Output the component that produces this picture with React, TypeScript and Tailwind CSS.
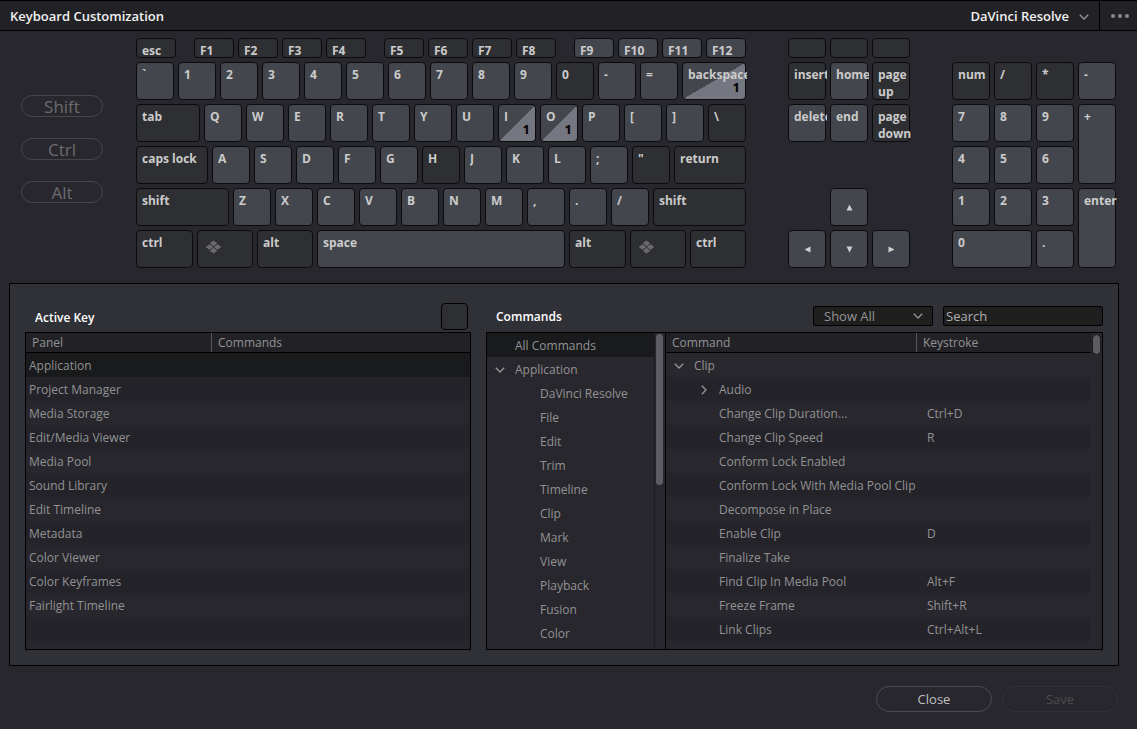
import type { ReactNode } from "react";

type KeyProps = {
  label?: string;
  size?: string;
  lit?: boolean;
  count?: number;
  short?: boolean;
  children?: ReactNode;
};

function Key({ label = "", size = "w-[38px]", lit = false, count, short = false, children }: KeyProps) {
  const fill = count
    ? "bg-[linear-gradient(to_bottom_right,#43464c_50%,#747680_50%)]"
    : lit
      ? "bg-[#43464c]"
      : "bg-[#2e2f32]";
  return (
    <button
      type="button"
      aria-label={label || "Unassigned key"}
      className={`relative flex min-w-0 items-start rounded border border-[#0b0b0d] pt-[3px] pl-[5px] text-left text-[12px] leading-[17px] font-bold text-[#cbcbcb] ${short ? "h-5" : "h-full"} ${size} ${fill}`}
    >
      {children ?? (
        <span className={`-mr-0.5 min-w-0 flex-1 overflow-x-clip ${label.startsWith("page") ? "" : "whitespace-nowrap"}`}>
          {label}
        </span>
      )}
      {count ? <span className="absolute right-[5px] bottom-[3px] text-[13px] text-black">{count}</span> : null}
    </button>
  );
}

function Keys({ labels, dim = [] }: { labels: string[]; dim?: string[] }) {
  return (
    <>
      {labels.map((l) => (
        <Key key={l} label={l} lit={!dim.includes(l)} count={l === "I" || l === "O" ? 1 : undefined} />
      ))}
    </>
  );
}

function MetaKey() {
  return (
    <Key label="meta" size="w-14">
      <svg className="mt-[6px] ml-[3px]" width="15" height="14" viewBox="0 0 16 14" fill="#6b6b6d" aria-hidden="true">
        <path d="M8 0 L11.4 2.4 Q11.8 3 11.4 3.6 L8 6.2 L4.6 3.6 Q4.2 3 4.6 2.4Z" />
        <path d="M8 7.8 L11.4 10.4 Q11.8 11 11.4 11.6 L8 14 L4.6 11.6 Q4.2 11 4.6 10.4Z" />
        <path d="M3.7 4 L7.1 6.4 Q7.5 7 7.1 7.6 L3.7 10 L0.3 7.6 Q-.1 7 .3 6.4Z" />
        <path d="M12.3 4 L15.7 6.4 Q16.1 7 15.7 7.6 L12.3 10 L8.9 7.6 Q8.5 7 8.9 6.4Z" />
      </svg>
    </Key>
  );
}

function ArrowKey({ name, d }: { name: string; d: string }) {
  return (
    <Key label={name} lit>
      <svg className="mt-3 ml-[10px]" width="7" height="7" viewBox="0 0 7 7" fill="#d0d0d0" aria-hidden="true">
        <path d={d} />
      </svg>
    </Key>
  );
}

function Chevron({ right = false, className = "" }: { right?: boolean; className?: string }) {
  return (
    <svg
      className={className}
      width="10"
      height="10"
      viewBox="0 0 10 10"
      fill="none"
      stroke="#97979a"
      strokeWidth="1.3"
      aria-hidden="true"
    >
      <path d={right ? "M2.8 0.8 L7 5 L2.8 9.2" : "M0.8 2.8 L5 7 L9.2 2.8"} />
    </svg>
  );
}

const row = "flex h-[38px] gap-1";
const functionGroups = [
  { names: ["F1", "F2", "F3", "F4"], lit: false },
  { names: ["F5", "F6", "F7", "F8"], lit: false },
  { names: ["F9", "F10", "F11", "F12"], lit: true },
];

function MainKeys() {
  return (
    <div className="flex min-w-[610px] flex-1 flex-col gap-1">
      <div className="flex h-5 justify-between">
        <Key label="esc" size="w-10" short />
        {functionGroups.map((g) => (
          <div key={g.names[0]} className="flex gap-1">
            {g.names.map((n) => (
              <Key key={n} label={n} size="w-10" lit={g.lit} short />
            ))}
          </div>
        ))}
      </div>
      <div className={row}>
        <Keys labels={["`", "1", "2", "3", "4", "5", "6", "7", "8", "9", "0", "-", "="]} dim={["0"]} />
        <Key label="backspace" size="flex-1" count={1} />
      </div>
      <div className={row}>
        <Key label="tab" size="flex-1" />
        <Keys labels={["Q", "W", "E", "R", "T", "Y", "U", "I", "O", "P", "[", "]", "\\"]} dim={["\\"]} />
      </div>
      <div className={row}>
        <Key label="caps lock" size="flex-1" />
        <Keys labels={["A", "S", "D", "F", "G", "H", "J", "K", "L", ";", '"']} dim={["H", '"']} />
        <Key label="return" size="flex-1" />
      </div>
      <div className={row}>
        <Key label="shift" size="flex-1" />
        <Keys labels={["Z", "X", "C", "V", "B", "N", "M", ",", ".", "/"]} />
        <Key label="shift" size="flex-1" />
      </div>
      <div className={row}>
        <Key label="ctrl" size="w-[57px]" />
        <MetaKey />
        <Key label="alt" size="w-14" />
        <Key label="space" size="flex-1" lit />
        <Key label="alt" size="w-[57px]" />
        <MetaKey />
        <Key label="ctrl" size="w-14" />
      </div>
    </div>
  );
}

function NavKeys() {
  return (
    <div className="grid grid-cols-[repeat(3,38px)] grid-rows-[20px_repeat(5,38px)] gap-1">
      <Key short />
      <Key short />
      <Key short />
      <Key label="insert" />
      <Key label="home" lit />
      <Key label="page up" />
      <Key label="delete" lit />
      <Key label="end" lit />
      <Key label="page down" />
      <div className="col-start-2 row-start-5">
        <ArrowKey name="up" d="M3.5 0.5 L6.5 6.5 H0.5Z" />
      </div>
      <div className="col-start-1 row-start-6">
        <ArrowKey name="left" d="M0.5 3.5 L6.5 0.5 V6.5Z" />
      </div>
      <div className="col-start-2 row-start-6">
        <ArrowKey name="down" d="M3.5 6.5 L0.5 0.5 H6.5Z" />
      </div>
      <div className="col-start-3 row-start-6">
        <ArrowKey name="right" d="M6.5 3.5 L0.5 0.5 V6.5Z" />
      </div>
    </div>
  );
}

function NumPad() {
  return (
    <div className="grid grid-cols-[repeat(4,38px)] grid-rows-[repeat(5,38px)] gap-1 pt-6">
      <Keys labels={["num", "/", "*", "-"]} dim={["num", "/", "*"]} />
      <Keys labels={["7", "8", "9"]} />
      <Key label="+" lit size="row-span-2" />
      <Keys labels={["4", "5", "6"]} />
      <Keys labels={["1", "2", "3"]} />
      <Key label="enter" lit size="row-span-2" />
      <Key label="0" lit size="col-span-2" />
      <Key label="." lit />
    </div>
  );
}

const panels = [
  "Application",
  "Project Manager",
  "Media Storage",
  "Edit/Media Viewer",
  "Media Pool",
  "Sound Library",
  "Edit Timeline",
  "Metadata",
  "Color Viewer",
  "Color Keyframes",
  "Fairlight Timeline",
  "",
];

const groups = [
  "DaVinci Resolve",
  "File",
  "Edit",
  "Trim",
  "Timeline",
  "Clip",
  "Mark",
  "View",
  "Playback",
  "Fusion",
  "Color",
];

const commands = [
  ["Change Clip Duration...", "Ctrl+D"],
  ["Change Clip Speed", "R"],
  ["Conform Lock Enabled", ""],
  ["Conform Lock With Media Pool Clip", ""],
  ["Decompose in Place", ""],
  ["Enable Clip", "D"],
  ["Finalize Take", ""],
  ["Find Clip In Media Pool", "Alt+F"],
  ["Freeze Frame", "Shift+R"],
  ["Link Clips", "Ctrl+Alt+L"],
];

const headCell = "h-5 border-b border-black bg-[#222226] p-0 text-left font-normal";
const headLabel = "h-[19px] pl-1.5 leading-5";
const cell = "h-6 p-0 pt-0.5";

function PanelTable() {
  return (
    <div className="h-[318px] border border-black bg-[#28272d]">
      <table className="w-full table-fixed border-separate border-spacing-0">
        <colgroup>
          <col className="w-[186px]" />
          <col />
        </colgroup>
        <thead>
          <tr>
            <th className={headCell}>
              <div className={`${headLabel} border-r border-[#55565a]`}>Panel</div>
            </th>
            <th className={headCell}>
              <div className={headLabel}>Commands</div>
            </th>
          </tr>
        </thead>
        <tbody>
          {panels.map((p, i) => (
            <tr key={p} className={i === 0 ? "bg-[#191a1b]" : i % 2 ? "bg-[#242329]" : ""}>
              <td className={`${cell} pl-[3px]`}>{p}</td>
              <td className={cell} />
            </tr>
          ))}
        </tbody>
      </table>
    </div>
  );
}

function CommandTree() {
  return (
    <div className="flex w-[179px] shrink-0 border-r border-black">
      <ul className="flex-1 leading-6">
        <li>
          <button type="button" className="block h-6 w-full bg-[#191a1b] pt-px pl-7 text-left">
            All Commands
          </button>
        </li>
        <li>
          <button type="button" aria-expanded="true" className="flex h-6 w-full items-center pt-0.5 pl-2 text-left">
            <Chevron className="mr-2.5" />
            Application
          </button>
          <ul>
            {groups.map((g) => (
              <li key={g}>
                <button type="button" className="block h-6 w-full pt-px pl-[53px] text-left">
                  {g}
                </button>
              </li>
            ))}
          </ul>
        </li>
      </ul>
      <div className="w-[11px] border-l border-[#1c1c20] pt-px pl-px">
        <div className="h-[151px] w-[7px] rounded-full bg-[#5b5d63]" />
      </div>
    </div>
  );
}

function CommandTable() {
  return (
    <div className="flex min-w-0 flex-1">
      <table className="h-fit flex-1 table-fixed border-separate border-spacing-0">
        <colgroup>
          <col />
          <col className="w-[174px]" />
        </colgroup>
        <thead>
          <tr>
            <th className={headCell}>
              <div className={`${headLabel} border-r border-[#55565a]`}>Command</div>
            </th>
            <th className={headCell}>
              <div className={headLabel}>Keystroke</div>
            </th>
          </tr>
        </thead>
        <tbody>
          <tr>
            <td className={`${cell} pl-2`}>
              <button type="button" aria-expanded="true" className="flex items-center gap-2.5">
                <Chevron />
                Clip
              </button>
            </td>
            <td className={cell} />
          </tr>
          <tr className="bg-[#242329]">
            <td className={`${cell} pl-[33px]`}>
              <button type="button" aria-expanded="false" className="flex items-center gap-2.5">
                <Chevron right />
                Audio
              </button>
            </td>
            <td className={cell} />
          </tr>
          {commands.map(([name, stroke], i) => (
            <tr key={name} className={i % 2 ? "bg-[#242329]" : ""}>
              <td className={`${cell} pl-[53px] whitespace-nowrap`}>{name}</td>
              <td className={`${cell} pl-2.5`}>{stroke}</td>
            </tr>
          ))}
        </tbody>
      </table>
      <div className="w-[11px] shrink-0 pt-px pl-px">
        <div className="h-[21px] w-[9px] rounded-full border border-[#1a1a1d] bg-[#5b5d63]" />
      </div>
    </div>
  );
}

export default function App() {
  return (
    <div className="flex min-h-screen flex-col bg-[#28272d] font-['Open_Sans','Noto_Sans',sans-serif] text-[12px] text-[#929294]">
      <header className="flex h-[31px] items-stretch border-y border-black bg-[#222226] text-[13px] font-semibold text-[#f0f0f0]">
        <h1 className="flex flex-1 items-center pt-0.5 pl-2.5">Keyboard Customization</h1>
        <button type="button" className="flex items-center gap-2.5 pt-0.5 pr-2.5">
          DaVinci Resolve
          <Chevron />
        </button>
        <button type="button" aria-label="More options" className="flex w-[38px] items-center justify-center gap-[3px] border-l border-black pt-px pl-0.5">
          <span className="size-1 rounded-full bg-[#8b8b8e]" />
          <span className="size-1 rounded-full bg-[#8b8b8e]" />
          <span className="size-1 rounded-full bg-[#8b8b8e]" />
        </button>
      </header>

      <section aria-label="Keyboard" className="flex pt-[7px] pr-[21px] pl-[21px]">
        <div className="mr-[33px] flex w-[82px] flex-col gap-[21px] pt-[57px]">
          {["Shift", "Ctrl", "Alt"].map((m) => (
            <button
              key={m}
              type="button"
              className="flex h-[22px] items-center justify-center rounded-full border border-[#45454a] pt-0.5 text-[17px] leading-5 text-[#6b6b6f]"
            >
              {m}
            </button>
          ))}
        </div>
        <MainKeys />
        <div className="ml-[42px] flex gap-[42px]">
          <NavKeys />
          <NumPad />
        </div>
      </section>

      <main className="mt-[15px] mr-[18px] ml-[9px] flex gap-[15px] border border-black bg-[#303136] p-[15px]">
        <section className="min-w-0 flex-[446]">
          <div className="flex h-[33px] items-start justify-between pt-1 pr-[3px] pl-[10px]">
            <h2 className="pt-px leading-[27px] font-semibold text-white">Active Key</h2>
            <div className="size-[27px] rounded border border-black bg-[#2e2f32]" />
          </div>
          <PanelTable />
        </section>
        <section className="min-w-0 flex-[617]">
          <div className="flex h-[33px] items-start gap-2.5 pt-[7px] pl-[10px]">
            <h2 className="flex-1 leading-[22px] font-semibold text-white">Commands</h2>
            <div className="relative w-[120px]">
              <select
                aria-label="Filter commands"
                className="block h-5 w-full appearance-none rounded-xs border border-black bg-[#1f1f1f] pl-2.5 text-[13px] leading-[18px] text-[#929294]"
              >
                <option>Show All</option>
              </select>
              <Chevron className="pointer-events-none absolute top-[5px] right-2.5" />
            </div>
            <input
              type="search"
              aria-label="Search commands"
              placeholder="Search"
              className="h-5 w-40 rounded-xs border border-black bg-[#1f1f1f] px-0.5 text-[13px] leading-[18px] text-[#b0b0b0] placeholder:text-[#b0b0b0]"
            />
          </div>
          <div className="flex h-[318px] border border-black">
            <div className="flex min-w-0 flex-1 bg-[#28272d]">
              <CommandTree />
              <CommandTable />
            </div>
          </div>
        </section>
      </main>

      <footer className="flex justify-end gap-2.5 px-[19px] py-5 text-[13px]">
        <button type="button" className="h-[26px] w-[116px] rounded-full border border-[#4b4b50] pt-px text-[#c0c0c0]">
          Close
        </button>
        <button type="button" disabled className="h-[26px] w-[116px] rounded-full border border-[#313136] pt-px text-[#4c4c50]">
          Save
        </button>
      </footer>
    </div>
  );
}
